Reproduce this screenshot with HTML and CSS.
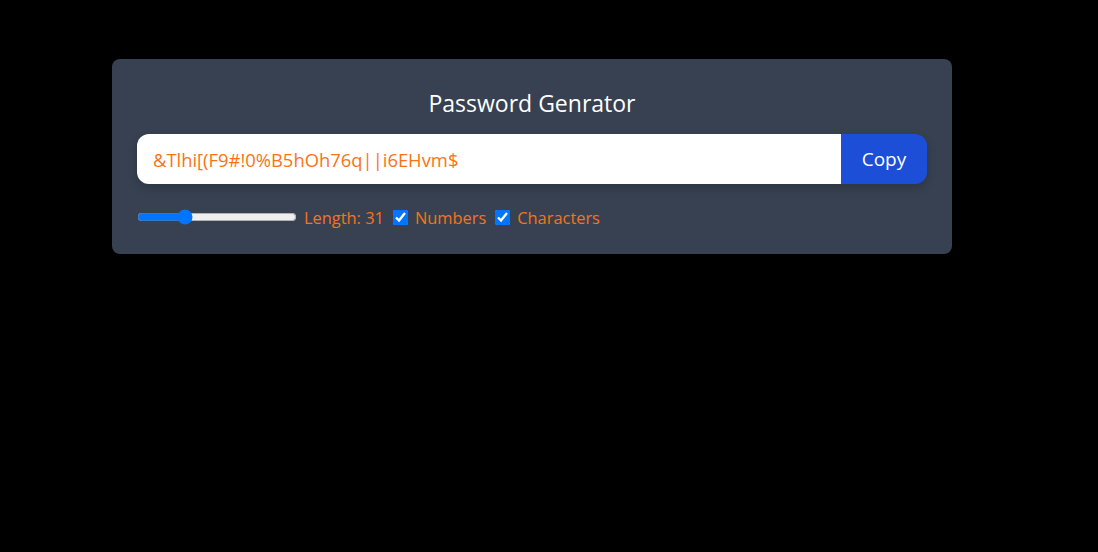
FILE: index.html
```html
<!DOCTYPE html>
<html lang="en">
<head>
<meta charset="utf-8">
<title>Password Generator</title>
<link rel="stylesheet" href="styles.css">
</head>
<body>
<div class="card">
  <h1 class="title">Password Genrator</h1>
  <div class="field">
    <input class="pw" type="text" value="&amp;Tlhi[(F9#!0%B5hOh76q||i6EHvm$" readonly>
    <button class="copy">Copy</button>
  </div>
  <div class="controls">
    <div class="group">
      <input class="range" type="range" min="6" max="100" value="32">
      <label>Length: 31</label>
    </div>
    <div class="group">
      <input type="checkbox" class="check" id="num" checked>
      <label for="num">Numbers</label>
    </div>
    <div class="group">
      <input type="checkbox" class="check" id="chr" checked>
      <label for="chr">Characters</label>
    </div>
  </div>
</div>
</body>
</html>
```
FILE: styles.css
```css
html, body {
  margin: 0;
  padding: 0;
  background: #000;
  height: 100%;
}
body {
  font-family: "Open Sans", "Noto Sans", sans-serif;
}
.card {
  width: 840px;
  box-sizing: border-box;
  margin: 59px 0 0 112px;
  background: #374151;
  border-radius: 8px;
  padding: 28px 25px 25px;
  color: #f97316;
}
.title {
  margin: 0;
  font-size: 23px;
  font-weight: 400;
  line-height: 32px;
  color: #fff;
  text-align: center;
}
.field {
  display: flex;
  margin-top: 15px;
  height: 50px;
  border-radius: 12px;
  overflow: hidden;
  box-shadow: 0 4px 10px rgba(0,0,0,0.18);
}
.pw {
  flex: 1;
  border: 0;
  outline: none;
  padding: 0 16px;
  font-family: inherit;
  font-size: 18.4px;
  color: #f97316;
  background: #fff;
  min-width: 0;
}
.copy {
  border: 0;
  background: #1d4ed8;
  color: #fff;
  font-family: inherit;
  font-size: 19px;
  width: 86px;
  padding: 0;
}
.controls {
  display: flex;
  align-items: center;
  gap: 9px;
  margin-top: 21px;
  height: 24px;
  font-size: 16.4px;
}
.group {
  display: flex;
  align-items: center;
  gap: 7px;
}
.range {
  width: 160px;
  margin: 0;
  cursor: pointer;
}
.check {
  width: 15px;
  height: 15px;
  margin: 0;
}
```
